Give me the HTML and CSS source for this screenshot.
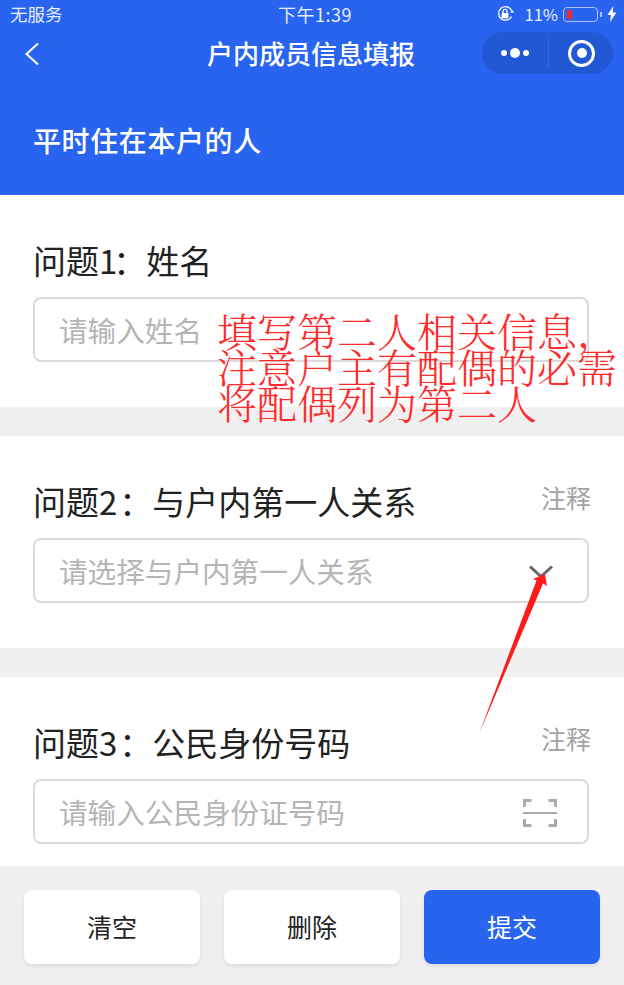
FILE: index.html
```html
<!DOCTYPE html>
<html lang="zh-CN">
<head>
<meta charset="utf-8">
<title>户内成员信息填报</title>
<link rel="stylesheet" href="styles.css">
</head>
<body>
<div class="page">
  <header class="top">
    <div class="status">
      <span class="status-left">无服务</span>
      <span class="status-time">下午1:39</span>
      <div class="status-right">
        <svg class="lock" width="20" height="18" viewBox="0 0 20 18"><path d="M15.5 11.5A6.8 6.8 0 1 1 15.6 5.5" fill="none" stroke="#fff" stroke-width="1.3"/><path d="M14 7.5h4.2l-2-2.600z" fill="#fff"/><rect x="5.600" y="8" width="6.800" height="5.200" rx=".8" fill="#fff"/><path d="M7 8V6.400a2 2 0 0 1 4 0V8" fill="none" stroke="#fff" stroke-width="1.200"/></svg>
        <span class="pct">11%</span>
        <div class="battery"><div class="battery-level"></div></div>
        <div class="battery-tip"></div>
        <svg class="bolt" width="10" height="16" viewBox="0 0 10 16"><path d="M6.200 0 0.500 9h3.400L3 16l6.500-9.600H5.800z" fill="#fff"/></svg>
      </div>
    </div>
    <nav class="nav">
      <svg class="back" width="16" height="24" viewBox="0 0 16 24"><path d="M14 1.500 2.500 12 14 22.500" fill="none" stroke="#fff" stroke-width="2"/></svg>
      <h1 class="nav-title">户内成员信息填报</h1>
      <div class="capsule">
        <div class="dots"><i class="dot"></i><i class="dot dot-big"></i><i class="dot"></i></div>
        <div class="capsule-sep"></div>
        <div class="ring"><i class="ring-core"></i></div>
      </div>
    </nav>
    <h2 class="subtitle">平时住在本户的人</h2>
  </header>

  <section class="card first">
    <div class="q-row"><span class="q-title">问题<span class="num-narrow">1</span>：姓名</span></div>
    <div class="field"><span class="ph">请输入姓名</span></div>
  </section>
  <section class="card second">
    <div class="q-row"><span class="q-title">问题<span class="num-wide">2</span>：与户内第一人关系</span><span class="note">注释</span></div>
    <div class="field"><span class="ph">请选择与户内第一人关系</span>
      <svg class="chev" width="26" height="14" viewBox="0 0 26 14"><path d="M2 1.500 13 11.500 24 1.500" fill="none" stroke="#666" stroke-width="3"/></svg>
    </div>
  </section>
  <section class="card third">
    <div class="q-row"><span class="q-title">问题<span class="num-wide">3</span>：公民身份号码</span><span class="note">注释</span></div>
    <div class="field"><span class="ph">请输入公民身份证号码</span>
      <svg class="scan" width="34" height="28" viewBox="0 0 34 28"><path d="M1.500 8V1.500H8.500M25.500 1.500H32.500V8M1.500 20V26.500H8.500M25.500 26.500H32.500V20" fill="none" stroke="#aaa" stroke-width="3"/><path d="M0 14H34" stroke="#aaa" stroke-width="2"/></svg>
    </div>
  </section>

  <footer class="actions">
    <button class="btn">清空</button>
    <button class="btn">删除</button>
    <button class="btn btn-primary">提交</button>
  </footer>

  <div class="annot">填写第二人相关信息，<br>注意户主有配偶的必需<br>将配偶列为第二人</div>
  <svg class="arrow" width="80" height="170" viewBox="0 0 80 170"><path d="M1 165 58.500 11.500 55 10 67 5 69 17 65 14.500z" fill="#ff1a1a"/></svg>
</div>
</body>
</html>
```

FILE: styles.css
```css
* { box-sizing: border-box; margin: 0; padding: 0; }
html, body { width: 624px; height: 985px; overflow: hidden; }
body { font-family: "Noto Sans CJK SC", "Noto Sans", sans-serif; background: #f0f0f0; }
.page { position: relative; width: 624px; height: 985px; overflow: hidden; display: flex; flex-direction: column; }

.top { height: 195px; flex: none; background: #2864f0; color: #fff; }
.status { height: 28px; position: relative; display: flex; justify-content: space-between; align-items: center; padding: 0 7px 0 10px; font-size: 17.500px; color: #e6edff; }
.status-time { position: absolute; left: 278px; top: 2px; line-height: 24px; font-size: 18px; letter-spacing: .5px; }
.status-left { line-height: 24px; }
.status-right { display: flex; align-items: center; }
.lock { margin-right: 8px; }
.pct { margin-right: 5px; font-size: 16.500px; }
.battery { width: 35px; height: 15px; border: 1px solid #a9c2f8; border-radius: 4px; padding: 2px 3px; }
.battery-level { width: 5px; height: 100%; background: #f02a2a; border-radius: 1px; }
.battery-tip { width: 2px; height: 5px; background: #a9c2f8; margin: 0 5px 0 2px; }

.nav { position: relative; height: 52px; display: flex; align-items: center; padding-left: 24px; }
.nav-title { position: absolute; left: 0; right: 2px; top: 0; text-align: center; font-size: 26px; font-weight: 500; line-height: 50px; }
.capsule { position: absolute; left: 482px; top: 4px; width: 131px; height: 42px; border-radius: 21px; background: #2258d4; display: flex; align-items: center; }
.dots { width: 66px; display: flex; align-items: center; justify-content: center; gap: 3px; }
.dot { display: block; width: 6px; height: 6px; border-radius: 50%; background: #fff; }
.dot-big { width: 10px; height: 10px; }
.capsule-sep { width: 1px; height: 30px; background: #3a6ade; }
.ring { margin-left: 19px; width: 27px; height: 27px; border: 3.500px solid #fff; border-radius: 50%; display: flex; align-items: center; justify-content: center; }
.ring-core { display: block; width: 10px; height: 10px; border-radius: 50%; background: #fff; }
.subtitle { font-size: 28px; font-weight: 500; padding: 42px 0 0 33px; line-height: 36px; letter-spacing: .6px; }

.card { background: #fff; padding: 43px 35px 0 33px; flex: none; }
.first, .second { height: 212px; margin-bottom: 29px; }
.third { height: 189px; }
.q-row { display: flex; justify-content: space-between; height: 59px; }
.q-title { font-size: 33px; line-height: 44px; color: #222; }
.num-narrow { letter-spacing: -4px; }
.num-wide { letter-spacing: 2px; }
.note { font-size: 25px; line-height: 36px; color: #a3a3a3; margin-right: -2px; }
.field { height: 65px; border: 2px solid #dadada; border-radius: 8px; padding: 0 24px 1px; display: flex; align-items: center; justify-content: space-between; }
.ph { font-size: 28.600px; color: #b5b5b5; }
.chev { margin-right: 9px; margin-top: 3px; }
.scan { margin-right: 6px; margin-top: 3px; }

.actions { flex: 1; display: flex; justify-content: space-between; padding: 24px 24px 0; background: #f0f0f0; }
.btn { width: 176px; height: 74px; border: 0; border-radius: 8px; padding-bottom: 2px; background: #fff; font: inherit; font-size: 25px; color: #222; box-shadow: 0 2px 4px rgba(0,0,0,.08); }
.btn-primary { background: #2864f0; color: #fff; }

.annot { position: absolute; left: 217px; top: 312px; font-family: "Noto Serif CJK SC", "Liberation Serif", "Noto Sans CJK SC", serif; font-size: 40px; font-weight: 300; line-height: 36px; color: #ff2a2a; white-space: nowrap; }
.arrow { position: absolute; left: 478px; top: 569px; }
```
